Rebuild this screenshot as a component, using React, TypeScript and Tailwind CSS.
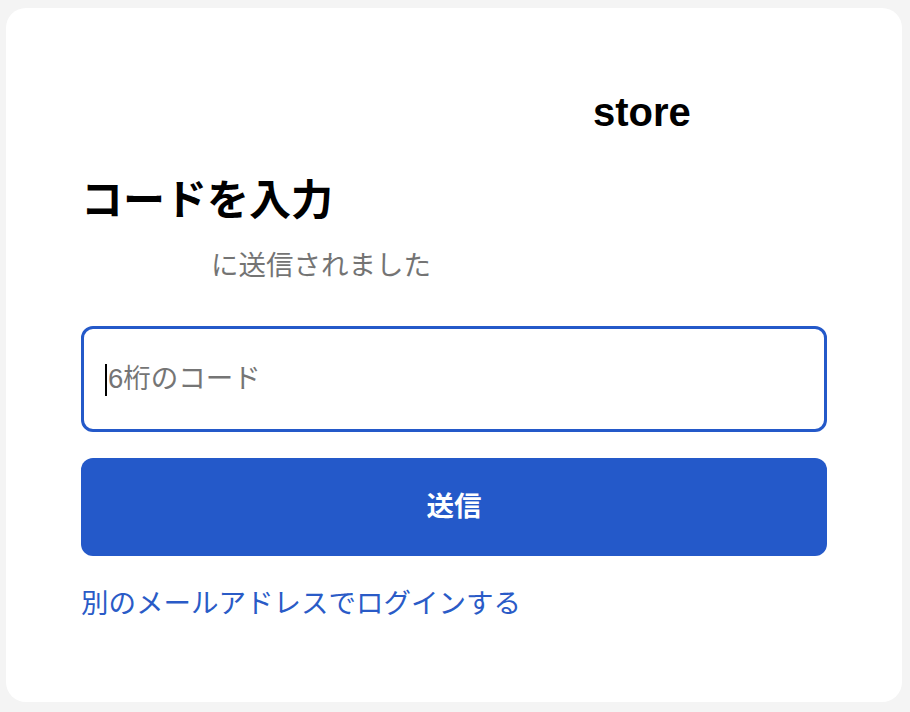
export default function App() {
  return (
    <div
      className="h-[712px] w-full bg-[#f4f4f4] pl-[6px] pr-[8px] pt-[8px] pb-[10px]"
      style={{ fontFamily: '"Liberation Sans", "Noto Sans CJK JP", sans-serif' }}
    >
      <div className="flex h-full flex-col rounded-[20px] bg-white px-[75px]">
        {/* logo row */}
        <div className="mt-[81px] pl-[512px]">
          <span className="text-[40px] font-bold leading-[46px] text-black">store</span>
        </div>

        <h1 className="mt-[42px] text-[42px] font-bold leading-[48px] text-black">コードを入力</h1>

        <p className="mt-[23px] pl-[130px] text-[27.5px] leading-[36px] text-[#747474]">に送信されました</p>

        <div className="relative mt-[42px]">
          <input
            type="text"
            placeholder="6桁のコード"
            className="h-[106px] w-full rounded-[12px] border-[3px] border-[#2459c9] bg-white pl-[24px] text-[27.5px] text-black outline-none placeholder:text-[#757575]"
          />
          <span className="pointer-events-none absolute left-[24px] top-[38px] h-[32px] w-[2px] bg-black" />
        </div>

        <button
          type="button"
          className="mt-[26px] h-[98px] w-full rounded-[12px] bg-[#2459c9] text-[27.5px] font-bold text-white"
        >
          送信
        </button>

        <a href="#" className="mt-[30px] text-[27.5px] leading-[36px] text-[#2a5bc7]">
          別のメールアドレスでログインする
        </a>
      </div>
    </div>
  );
}
